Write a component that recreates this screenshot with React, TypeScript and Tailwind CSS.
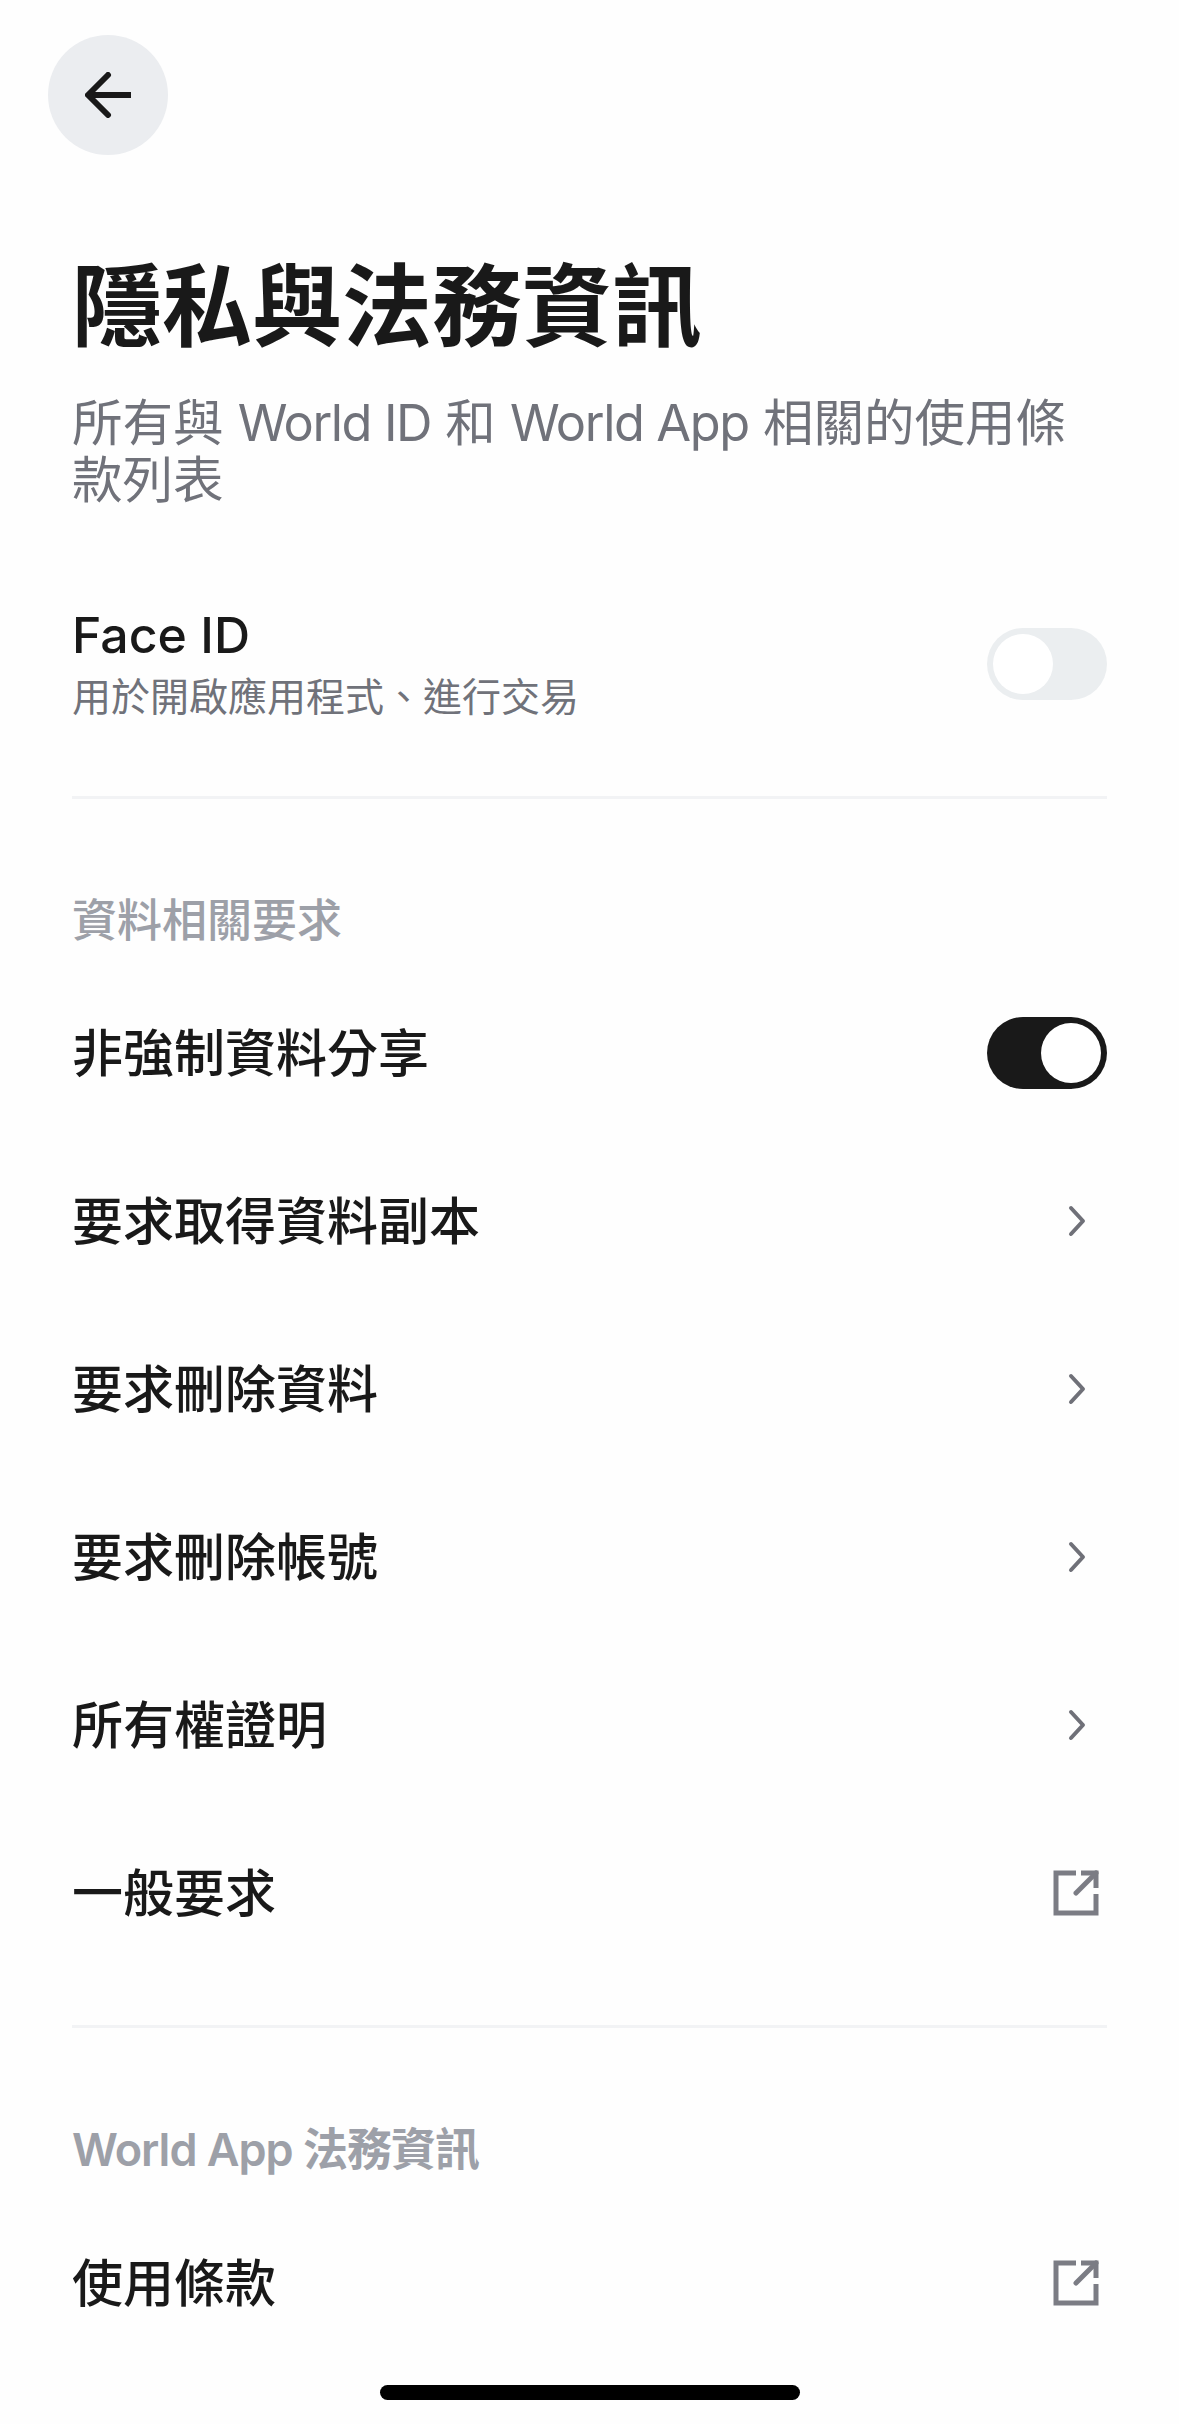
const latin = "font-['Inter','Noto_Sans_CJK_TC',sans-serif]"

function Toggle({ on }: { on?: boolean }) {
  return (
    <div
      className={`flex h-[72px] w-[120px] items-center rounded-full p-[6px] ${on ? "justify-end bg-[#191919]" : "justify-start bg-[#ebeef0]"}`}
    >
      <div className="h-[60px] w-[60px] rounded-full bg-white" />
    </div>
  )
}

function ExternalIcon() {
  return (
    <svg width="46" height="46" viewBox="0 0 46 46" fill="none" stroke="#7b7c84" strokeWidth="5" className="mr-[8px]">
      <path d="M23 3H3V43H43V24" />
      <path d="M28 3H43V18" />
      <path d="M43 3L23 23" strokeLinecap="round" />
    </svg>
  )
}

function Chevron() {
  return (
    <svg width="18" height="32" viewBox="0 0 18 32" fill="none" stroke="#6f7078" strokeWidth="4" strokeLinecap="round" strokeLinejoin="round" className="mr-[21px]">
      <path d="M3 3L15 16L3 29" />
    </svg>
  )
}

function Row({ label, right }: { label: string; right: React.ReactNode }) {
  return (
    <div className="flex h-[168px] items-center justify-between">
      <span className="text-[51px] font-medium leading-none text-[#191919]">{label}</span>
      {right}
    </div>
  )
}

export default function App() {
  return (
    <div className={`relative h-[2424px] w-[1179px] overflow-hidden bg-[#fefefe] ${latin}`}>
      <div className="px-[72px] pt-[35px]">
        <button className="-ml-[24px] flex h-[120px] w-[120px] items-center justify-center rounded-full bg-[#ebedf0]">
          <svg width="46" height="46" viewBox="0 0 46 46" fill="none" stroke="#191919" strokeWidth="6">
            <path d="M46 23H4" />
            <path d="M23 3L3 23L23 43" strokeLinecap="round" strokeLinejoin="round" />
          </svg>
        </button>

        <h1 className="mt-[97px] text-[90px] font-bold leading-[110px] text-[#191919]">隱私與法務資訊</h1>
        <p className="mt-[32px] text-[50.5px] leading-[57px] text-[#70727a]">
          所有與 <span className="tracking-[-1.4px]">World ID</span> 和 <span className="tracking-[-1.4px]">World App</span> 相關的使用條款列表
        </p>

        <div className="mt-[97px] flex items-center justify-between pb-[74px]">
          <div>
            <div className="text-[50px] font-medium leading-[60px] text-[#191919]">Face ID</div>
            <div className="mt-[7px] text-[39px] leading-[50px] text-[#70727a]">用於開啟應用程式、進行交易</div>
          </div>
          <Toggle />
        </div>
        <div className="h-[3px] bg-[#f2f3f5]" />

        <div className="mt-[95px] text-[45px] font-medium leading-[54px] text-[#9da0a8]">資料相關要求</div>
        <div className="mt-[21px]">
          <Row label="非強制資料分享" right={<Toggle on />} />
          <Row label="要求取得資料副本" right={<Chevron />} />
          <Row label="要求刪除資料" right={<Chevron />} />
          <Row label="要求刪除帳號" right={<Chevron />} />
          <Row label="所有權證明" right={<Chevron />} />
          <Row label="一般要求" right={<ExternalIcon />} />
        </div>
        <div className="mt-[48px] h-[3px] bg-[#f2f3f5]" />

        <div className="mt-[95px] text-[45px] font-semibold leading-[54px] tracking-[-1px] text-[#9da0a8]">World App 法務資訊</div>
        <div className="mt-[22px]">
          <Row label="使用條款" right={<ExternalIcon />} />
        </div>
      </div>

      {/* home indicator */}
      <div className="absolute bottom-[24px] left-[380px] h-[15px] w-[420px] rounded-full bg-black" />
    </div>
  )
}
